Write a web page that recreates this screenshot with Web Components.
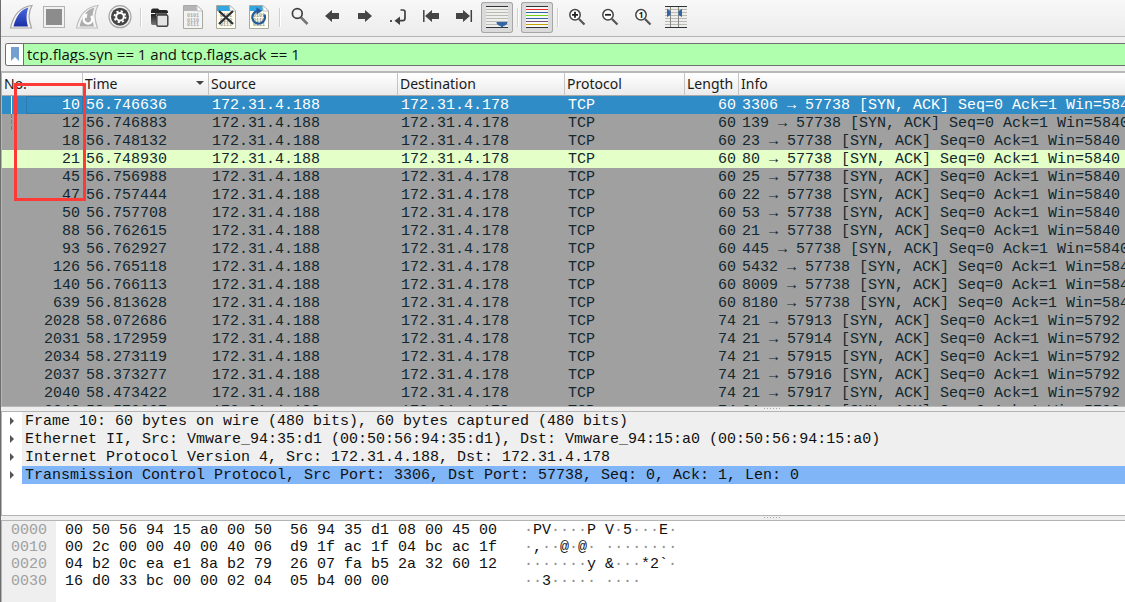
<!DOCTYPE html>
<html lang="en">
<head>
<meta charset="utf-8">
<title>Packet capture</title>
<style>
html, body { margin: 0; height: 100%; }
body { font: 15px/18px "Open Sans", "Noto Sans", sans-serif; color: #1a1a1a; background: #efefef; overflow: hidden; }
</style>
</head>
<body>
<capture-window></capture-window>
<script>
class Base extends HTMLElement {
  render(html) {
    const t = document.createElement('template');
    t.innerHTML = html;
    this.attachShadow({ mode: 'open' }).append(t.content.cloneNode(true));
  }
}

const fin = 'M5.5 28 C8 16 15 7 27 5.500 C23 12 23.500 20 26.500 28Z';
const finInner = 'M8.500 26.500 C11 16 16 9.500 23.500 7.500 C21 13 21 20 23 26.500Z';
const arrow = 'M9 16 L16 10 V13 H23 V19 H16 V22Z';
const page = (top, body, ink) => `
  <path d="M6.500 5.500 H20 L25.500 11 V28.500 H6.500Z" fill="${body}" stroke="#a9a99f"/>
  <path d="M7 6 H19.500 L20 11 H7Z" fill="${top}"/>
  <path d="M20 5.500 V11 H25.500Z" fill="#fff" stroke="#b5b5b0" stroke-width=".8"/>
  <g font-family="Liberation Mono, monospace" font-size="5" font-weight="bold" fill="${ink}">
    <text x="10" y="17">0101</text><text x="10" y="21.500">0110</text><text x="10" y="26">0111</text></g>`;
const lens = (mark) => `
  <path d="M18 19 L23.500 24.500" stroke="#555" stroke-width="2.200"/>
  <circle cx="14" cy="14.800" r="5.200" fill="#fff" stroke="#454545" stroke-width="1.500"/>${mark}`;
const line = (y, c, w = 1) => `<path d="M5 ${y}.500 H27" stroke="${c}" stroke-width="${w}"/>`;
const greys = [9, 12, 15, 18, 21, 24].map(y => line(y, '#b9bbb3')).join('');

const icons = {
  start: `<path d="${fin}" fill="#f4f4f4" stroke="#a4a4a4" stroke-width="1.200"/><path d="${finInner}" fill="url(#blue)"/>
    <defs><linearGradient id="blue" x2="0" y2="1"><stop stop-color="#4a6ae0"/><stop offset="1" stop-color="#1c2fa5"/></linearGradient></defs>`,
  stop: `<rect x="5.500" y="6.500" width="21" height="21" fill="#f1f1f1" stroke="#b2b2b2"/><rect x="8" y="9" width="16" height="16" fill="#8c8c8c"/>`,
  restart: `<path d="${fin}" fill="#f4f4f4" stroke="#bdbdbd" stroke-width="1.200"/><path d="${finInner}" fill="#adadad"/>
    <path d="M20 16.200 A4.300 4.300 0 1 1 13.800 16.400" fill="none" stroke="#fff" stroke-width="2.400"/><path d="M11.500 14.500 L16.500 13.500 L15.500 18.500Z" fill="#fff"/>`,
  options: `<circle cx="16" cy="16.700" r="11" fill="#f4f4f4" stroke="#a4a4a4" stroke-width="1.200"/><circle cx="16" cy="16.700" r="9" fill="#454545"/>
    <circle cx="16" cy="16.700" r="5.400" fill="none" stroke="#fff" stroke-width="2" stroke-dasharray="2.120 2.120"/>
    <circle cx="16" cy="16.700" r="3.800" fill="none" stroke="#fff" stroke-width="2"/>`,
  open: `<defs><linearGradient id="dk" x2="0" y2="1"><stop stop-color="#222"/><stop offset="1" stop-color="#777"/></linearGradient></defs>
    <path d="M7 11 Q7 8.500 9 8.500 H14 L15.500 10 H22 Q24 10 24 12 V13 H7Z" fill="#262626"/><path d="M7 14 H12 V25 H8.500 Q7 25 7 23Z" fill="url(#dk)"/>
    <rect x="12.800" y="15" width="11" height="11.300" rx="1.500" fill="#e3e3e3" stroke="#444" stroke-width="1.500"/><path d="M11 14 H23" stroke="#333" stroke-width="1.500"/>`,
  save: page('#b5b5b5', '#f3f3f3', '#a8a8a8'),
  close: page('#35a6e0', '#fffff0', '#99998c') + `<path d="M9 11 L23 24 M23 11 L9 24" stroke="#2a3033" stroke-width="2.300"/>`,
  reload: page('#35a6e0', '#fffff0', '#99998c') + `<path d="M21.300 14.500 A6.300 6.300 0 1 1 15 11" fill="none" stroke="#24599a" stroke-width="2.200"/><path d="M13.500 7.500 L19 11 L13.500 14.500Z" fill="#24599a"/>`,
  find: `<path d="M18 17.500 L24.500 24" stroke="#777" stroke-width="2.600"/><circle cx="14.300" cy="13.500" r="4.900" fill="#f4f4f4" stroke="#404040" stroke-width="1.700"/>`,
  back: `<path d="${arrow}" fill="#454545"/>`,
  forward: `<path d="${arrow}" fill="#454545" transform="rotate(180 16 16)"/>`,
  goto: `<path d="M18.500 10 H21 Q23 10 23 12 V18 Q23 20.700 20.500 20.700 H17" fill="none" stroke="#404040" stroke-width="1.700"/>
    <path d="M12.500 20.700 L18 16.500 V25Z" fill="#404040"/><rect x="8" y="20" width="2" height="2" fill="#555"/>`,
  first: `<path d="${arrow}" fill="#454545" transform="translate(1)"/><path d="M8.800 10 V22" stroke="#404040" stroke-width="1.500"/>`,
  last: `<path d="${arrow}" fill="#454545" transform="rotate(180 15.500 16)"/><path d="M23.300 10 V22" stroke="#404040" stroke-width="1.500"/>`,
  scroll: `<rect x="5" y="6" width="22" height="22" fill="#eeeeec"/>${line(6, '#2e3436')}${greys}${line(27, '#2e3436')}<path d="M15.500 22 H26.500 Q26.500 25 22.500 26 L21 28 L19.500 26 Q15.500 25 15.500 22Z" fill="#3465a4"/>`,
  colors: `<rect x="5" y="6" width="22" height="22" fill="#f7f7f7"/>${['#2e3436', '#ef2929', '#3465a4', '#73d216', '#3465a4', '#75507b', '#c4a000', '#2e3436'].map((c, i) => line(6 + i * 3, c)).join('')}`,
  zoomin: lens('<path d="M11 14.800 H17 M14 11.800 V17.800" stroke="#222" stroke-width="1.800"/>'),
  zoomout: lens('<path d="M11 14.800 H17" stroke="#222" stroke-width="1.800"/>'),
  zoom1: lens('<text x="14" y="18" text-anchor="middle" font-family="Open Sans, sans-serif" font-weight="bold" font-size="9" fill="#222">1</text>'),
  resize: `<rect x="5" y="6" width="22" height="22" fill="#eeeeec"/>${line(6, '#2e3436')}${greys}${line(27, '#2e3436')}
    <path d="M10.500 7 V27 M18.500 7 V27" stroke="#888a85"/><path d="M7 9 L10.500 11 V15 L7 17Z M22 9 L18.500 11 V15 L22 17Z" fill="#3465a4"/>`
};

customElements.define('tool-button', class extends Base {
  connectedCallback() {
    const on = this.hasAttribute('pressed');
    this.render(`<style>
      :host { display: block; flex: none; }
      button { display: block; width: 32px; height: 31px; padding: 0; border: 0; background: none; }
      button[aria-pressed=true] { border-radius: 3px; background: #dadada; box-shadow: inset 0 0 0 1px #a6a6a6; }
      svg { display: block; }
    </style><button type="button" aria-label="${this.getAttribute('label')}" aria-pressed="${on}">
      <svg width="32" height="31" viewBox="0 2 32 31" aria-hidden="true">${icons[this.getAttribute('icon')]}</svg></button>`);
  }
});

customElements.define('tool-bar', class extends Base {
  connectedCallback() {
    const b = (icon, label, p = '') => `<tool-button icon="${icon}" label="${label}" ${p}></tool-button>`;
    this.render(`<style>
      :host { display: flex; gap: 1px; padding: 2px 4px 3px; border-bottom: 1px solid #b4b4b4; background: linear-gradient(#f8f8f8, #ececec); }
      i { flex: none; width: 6px; height: 19px; margin-top: 6px; background: linear-gradient(90deg, transparent 3px, #cfcfcf 3px 4px, #fff 4px 5px, transparent 5px); }
    </style>
    ${b('start', 'Start capture')}${b('stop', 'Stop capture')}${b('restart', 'Restart capture')}${b('options', 'Capture options')}<i></i>
    ${b('open', 'Open file')}${b('save', 'Save file')}${b('close', 'Close file')}${b('reload', 'Reload file')}<i></i>
    ${b('find', 'Find packet')}${b('back', 'Previous packet')}${b('forward', 'Next packet')}${b('goto', 'Go to packet')}${b('first', 'First packet')}${b('last', 'Last packet')}${b('scroll', 'Auto scroll', 'pressed')}<i></i>
    ${b('colors', 'Colorize packets', 'pressed')}<i></i>
    ${b('zoomin', 'Zoom in')}${b('zoomout', 'Zoom out')}${b('zoom1', 'Normal size')}${b('resize', 'Resize columns')}`);
  }
});

customElements.define('filter-bar', class extends Base {
  connectedCallback() {
    this.render(`<style>
      :host { display: block; padding: 6px 0 5px 4px; border-bottom: 2px solid #b8b8b8; }
      form { display: flex; height: 21px; margin: 0; border: 1px solid #6f6f6f; border-right: 0; border-radius: 3px 0 0 3px; background: #fff; overflow: hidden; }
      button { flex: none; width: 18px; padding: 0; border: 0; border-right: 1px solid #6f6f6f; background: #fff; }
      svg { display: block; margin: auto; }
      input { flex: 1; min-width: 0; padding: 0 3px 2px; border: 0; outline: 0; background: #afffaf; color: #111; font: inherit; }
    </style>
    <form><button type="button" aria-label="Filter bookmarks"><svg width="8" height="15" viewBox="0 0 8 15"><path d="M0 0H8V14L4 10L0 14Z" fill="#729fcf"/></svg></button>
    <input aria-label="Display filter" value="tcp.flags.syn == 1 and tcp.flags.ack == 1" spellcheck="false"></form>`);
  }
});

const packets = [
  [10, '56.746636', 60, 3306, 57738, 5840], [12, '56.746883', 60, 139, 57738, 5840], [18, '56.748132', 60, 23, 57738, 5840],
  [21, '56.748930', 60, 80, 57738, 5840], [45, '56.756988', 60, 25, 57738, 5840], [47, '56.757444', 60, 22, 57738, 5840],
  [50, '56.757708', 60, 53, 57738, 5840], [88, '56.762615', 60, 21, 57738, 5840], [93, '56.762927', 60, 445, 57738, 5840],
  [126, '56.765118', 60, 5432, 57738, 5840], [140, '56.766113', 60, 8009, 57738, 5840], [639, '56.813628', 60, 8180, 57738, 5840],
  [2028, '58.072686', 74, 21, 57913, 5792], [2031, '58.172959', 74, 21, 57914, 5792], [2034, '58.273119', 74, 21, 57915, 5792],
  [2037, '58.373277', 74, 21, 57916, 5792], [2040, '58.473422', 74, 21, 57917, 5792], [2043, '58.573637', 74, 21, 57918, 5792]
];

customElements.define('packet-list', class extends Base {
  connectedCallback() {
    const rows = packets.map(([n, t, len, s, d, w], i) => `<tr class="${i === 0 ? 'sel' : i === 1 ? 'next' : n === 21 ? 'http' : ''}">
      <td>${n}</td><td>${t}</td><td>172.31.4.188</td><td>172.31.4.178</td><td>TCP</td><td>${len}</td><td>${s} → ${d} [SYN, ACK] Seq=0 Ack=1 Win=${w}</td></tr>`).join('');
    this.render(`<style>
      :host { display: block; position: relative; overflow: hidden; background: #a0a0a0; color: #12272e; border-bottom: 1px solid #b8b8b8; }
      table { width: 100%; table-layout: fixed; border-collapse: separate; border-spacing: 0; }
      th, td { text-align: left; white-space: nowrap; overflow: hidden; font-weight: normal; }
      th { height: 22px; padding: 0 2px; font: 14px/22px "Noto Sans", sans-serif; color: #1a1a1a; background: linear-gradient(#fff, #ebebeb); border-right: 1px solid #c4c4c4; border-bottom: 1px solid #a8a8a8; }
      th:last-child { border-right: 0; }
      td { padding: 2px 3px 0; font: 15px/16px "Liberation Mono", monospace; }
      td:nth-child(1), td:nth-child(6) { text-align: right; padding: 2px 3px 0 0; }
      .sort { display: flex; justify-content: space-between; align-items: center; padding-right: 2px; }
      .sort::after { content: ""; border: 4px solid transparent; border-top-color: #444; border-bottom: 0; margin-bottom: 2px; }
      .sel td { background: #308cc6; color: #fff; }
      .sel td:first-child { background: linear-gradient(#fff, #fff) 9px 0 / 1px 18px no-repeat, linear-gradient(#308cc6, #308cc6) 25px 1px / 55px 16px no-repeat, linear-gradient(#2a7bb0, #2a7bb0) 24px 0 / 57px 18px no-repeat, #308cc6; }
      .next td:first-child { background: repeating-linear-gradient(#808080 0 4px, transparent 4px 6px) 9px 0 / 1px 16px no-repeat; }
      .http td { background: #e4ffc7; }
      .note { position: absolute; left: 12px; top: 10px; width: 66px; height: 112px; border: 3px solid #fd3a35; }
    </style>
    <table><colgroup><col style="width:81px"><col style="width:126px"><col style="width:189px"><col style="width:167px"><col style="width:120px"><col style="width:54px"><col></colgroup>
    <thead><tr><th>No.</th><th><span class="sort">Time</span></th><th>Source</th><th>Destination</th><th>Protocol</th><th>Length</th><th>Info</th></tr></thead>
    <tbody>${rows}</tbody></table><div class="note"></div>`);
  }
});

customElements.define('pane-splitter', class extends Base {
  connectedCallback() {
    this.render(`<style>
      :host { display: flex; justify-content: center; height: 4px; flex: none; }
      i { width: 17px; height: 1px; margin: 1px 0 0 419px; background: repeating-linear-gradient(90deg, #aaa 0 1px, transparent 1px 3px); }
    </style><i></i>`);
  }
});

customElements.define('packet-details', class extends Base {
  connectedCallback() {
    const items = ['Frame 10: 60 bytes on wire (480 bits), 60 bytes captured (480 bits)',
      'Ethernet II, Src: Vmware_94:35:d1 (00:50:56:94:35:d1), Dst: Vmware_94:15:a0 (00:50:56:94:15:a0)',
      'Internet Protocol Version 4, Src: 172.31.4.188, Dst: 172.31.4.178',
      'Transmission Control Protocol, Src Port: 3306, Dst Port: 57738, Seq: 0, Ack: 1, Len: 0'];
    this.render(`<style>
      :host { display: block; flex: none; border: 1px solid #b4b4b4; border-width: 1px 0 1px; padding-bottom: 31px; background: #fff; color: #111; }
      ul { margin: 0; padding: 0; list-style: none; font: 15px/16px "Liberation Mono", monospace; }
      li { display: flex; white-space: pre; }
      button { flex: none; display: flex; align-items: center; width: 20px; padding: 0 0 0 8px; border: 0; background: none; }
      button::before { content: ""; border: 4px solid transparent; border-left-color: #555; border-right: 0; }
      span { flex: 1; padding: 2px 0 0 3px; background: #efefef; overflow: hidden; }
      li:last-child span { background: #80b5f8; }
    </style><ul>${items.map(t => `<li><button type="button" aria-label="Expand"></button><span>${t}</span></li>`).join('')}</ul>`);
  }
});

customElements.define('hex-view', class extends Base {
  connectedCallback() {
    const rows = [
      ['0000', '00 50 56 94 15 a0 00 50  56 94 35 d1 08 00 45 00', '·PV····P V·5···E·'],
      ['0010', '00 2c 00 00 40 00 40 06  d9 1f ac 1f 04 bc ac 1f', '·,··@·@· ········'],
      ['0020', '04 b2 0c ea e1 8a b2 79  26 07 fa b5 2a 32 60 12', '·······y &amp;···*2`·'],
      ['0030', '16 d0 33 bc 00 00 02 04  05 b4 00 00', '··3····· ····']];
    this.render(`<style>
      :host { display: block; flex: none; border-top: 1px solid #b4b4b4; background: #fff; color: #111; }
      pre { display: grid; grid-template-columns: 54px 432px 1fr; column-gap: 9px; margin: 0; padding: 1px 0 12px; font: 15px/17px "Liberation Mono", monospace; background: linear-gradient(90deg, #efefef 54px, #fff 54px); }
      .off { padding-left: 9px; color: #a0a0a0; }
      .asc { padding-left: 18px; }
      i { font-style: normal; color: #909090; }
    </style><pre>${rows.map(([o, h, a]) => `<span class="off">${o}</span><span>${h}</span><span class="asc">${a.replace(/·+/g, '<i>$&</i>')}</span>`).join('')}</pre>`);
  }
});

customElements.define('capture-window', class extends Base {
  connectedCallback() {
    this.render(`<style>
      :host { display: flex; flex-direction: column; height: 100vh; box-sizing: border-box; border-left: 1px solid #6e6e6e; }
      packet-list { flex: 1 1 0; min-height: 0; }
      packet-list, packet-details, hex-view { border-left: 1px solid #b4b4b4; }
    </style>
    <tool-bar></tool-bar><filter-bar></filter-bar><packet-list></packet-list><pane-splitter></pane-splitter>
    <packet-details></packet-details><pane-splitter></pane-splitter><hex-view></hex-view>`);
  }
});
</script>
</body>
</html>
